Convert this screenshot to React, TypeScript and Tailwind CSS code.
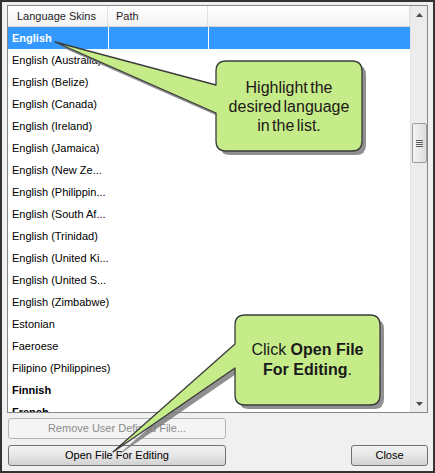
import React from 'react';

const languages: { name: string; bold?: boolean; selected?: boolean }[] = [
  { name: 'English', selected: true },
  { name: 'English (Australia)' },
  { name: 'English (Belize)' },
  { name: 'English (Canada)' },
  { name: 'English (Ireland)' },
  { name: 'English (Jamaica)' },
  { name: 'English (New Ze...' },
  { name: 'English (Philippin...' },
  { name: 'English (South Af...' },
  { name: 'English (Trinidad)' },
  { name: 'English (United Ki...' },
  { name: 'English (United S...' },
  { name: 'English (Zimbabwe)' },
  { name: 'Estonian' },
  { name: 'Faeroese' },
  { name: 'Filipino (Philippines)' },
  { name: 'Finnish', bold: true },
  { name: 'French', bold: true },
];

const calloutPath1 =
  'M55,42 L216,85 L216,71 Q216,61 226,61 L352,61 Q362,61 362,71 L362,141 Q362,151 352,151 L226,151 Q216,151 216,141 L216,113 Z';
const calloutPath2 =
  'M113,452 L235,344 L235,325 Q235,315 245,315 L370,315 Q380,315 380,325 L380,395 Q380,405 370,405 L245,405 Q235,405 235,395 L235,368 Z';

function Row({ name, bold, selected }: { name: string; bold?: boolean; selected?: boolean }) {
  return (
    <div className={`flex h-[22px] shrink-0 items-center ${selected ? 'bg-[#3399ff] text-white font-bold' : 'text-black'}`}>
      <div className={`w-[100px] h-full flex items-center pl-[4px] whitespace-nowrap ${bold ? 'font-bold' : ''}`}>{name}</div>
      <div className={`w-[100px] h-full ${selected ? 'border-l border-white' : ''}`} />
      <div className={`flex-1 h-full ${selected ? 'border-l border-white' : ''}`} />
    </div>
  );
}

function Scrollbar() {
  return (
    <div className="w-[17px] h-full bg-[#ececec] border-l border-[#e3e3e3] flex flex-col items-center">
      <div className="h-[17px] w-full flex items-center justify-center">
        <svg width="7" height="4" viewBox="0 0 7 4"><path d="M0,4 L3.5,0 L7,4 Z" fill="#4a4a4a" /></svg>
      </div>
      <div className="h-[100px]" />
      <div className="w-[15px] h-[40px] rounded-[2px] border border-[#9a9a9a] bg-gradient-to-r from-[#f4f4f4] to-[#dcdcdc] flex flex-col items-center justify-center gap-[1px]">
        <div className="w-[7px] h-[1px] bg-[#5e5e5e]" />
        <div className="w-[7px] h-[1px] bg-[#5e5e5e]" />
        <div className="w-[7px] h-[1px] bg-[#5e5e5e]" />
        <div className="w-[7px] h-[1px] bg-[#5e5e5e]" />
      </div>
      <div className="flex-1" />
      <div className="h-[17px] w-full flex items-center justify-center">
        <svg width="7" height="4" viewBox="0 0 7 4"><path d="M0,0 L3.5,4 L7,0 Z" fill="#4a4a4a" /></svg>
      </div>
    </div>
  );
}

function WinButton({ label, disabled, className }: { label: string; disabled?: boolean; className: string }) {
  return (
    <div
      className={`h-[21px] rounded-[3px] border flex items-center justify-center text-[11px] ${
        disabled
          ? 'border-[#b5b5b5] bg-[#f4f4f4] text-[#8b8b8b]'
          : 'border-[#707070] bg-gradient-to-b from-[#f2f2f2] via-[#e6e6e6] to-[#d2d2d2] text-black'
      } ${className}`}
    >
      {label}
    </div>
  );
}

export default function App() {
  return (
    <div className="relative w-[435px] h-[473px] border-2 border-[#333333] bg-[#f0f0f0] font-['Liberation_Sans',Arial,sans-serif] text-[11px] overflow-hidden">
      <div className="flex flex-col pl-[5px] pt-[3px] pr-[5px]">
        {/* list box */}
        <div className="w-[421px] h-[408px] border border-[#828790] bg-white flex">
          <div className="w-[402px] h-full flex flex-col overflow-hidden">
            <div className="h-[21px] shrink-0 flex bg-gradient-to-b from-white to-[#f3f3f3] border-b border-[#d5d5d5] text-[#1e1e1e]">
              <div className="w-[100px] border-r border-[#e2e2e2] flex items-center pl-[9px]">Language Skins</div>
              <div className="w-[100px] border-r border-[#e2e2e2] flex items-center pl-[8px]">Path</div>
              <div className="flex-1 border-r border-[#e2e2e2]" />
            </div>
            {languages.map((l) => (
              <Row key={l.name} {...l} />
            ))}
          </div>
          <Scrollbar />
        </div>
        <div className="mt-[5px] pl-[1px] flex flex-col gap-[6px]">
          <WinButton label="Remove User Defined File..." disabled className="w-[218px]" />
          <div className="flex items-center justify-between">
            <WinButton label="Open File For Editing" className="w-[218px]" />
            <WinButton label="Close" className="w-[77px]" />
          </div>
        </div>
      </div>

      {/* callout drawings */}
      <svg className="absolute left-[-2px] top-[-2px] pointer-events-none" width="435" height="473" viewBox="0 0 435 473">
        <path d={calloutPath1} transform="translate(4,4)" fill="#7d7d7d" opacity="0.85" />
        <path d={calloutPath2} transform="translate(4,4)" fill="#7d7d7d" opacity="0.85" />
        <path d={calloutPath1} fill="#c5ec88" stroke="#3b3b3b" strokeWidth="1.3" strokeLinejoin="round" />
        <path d={calloutPath2} fill="#c5ec88" stroke="#3b3b3b" strokeWidth="1.3" strokeLinejoin="round" />
      </svg>

      <div className="absolute left-[214px] top-[59px] w-[146px] h-[90px] flex items-center justify-center text-center text-[16px] leading-[19px] text-[#221818] [word-spacing:-2px]">
        Highlight the<br />desired language<br />in the list.
      </div>
      <div className="absolute left-[233px] top-[313px] w-[145px] h-[90px] flex items-center justify-center text-center text-[16px] leading-[20px] text-[#1a1a1a]">
        <span>
          Click <b>Open File</b>
          <br />
          <b>For Editing</b>.
        </span>
      </div>
    </div>
  );
}
